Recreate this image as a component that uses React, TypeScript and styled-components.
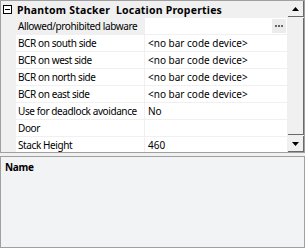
import styled, { createGlobalStyle } from 'styled-components';

const Global = createGlobalStyle`
  html, body { margin: 0; padding: 0; background: #f0f0f0; }
  body { font-family: "Noto Sans", "DejaVu Sans", sans-serif; font-size: 10px; color: #000; }
`;

const Frame = styled.div`
  width: 305px;
  height: 248px;
  display: flex;
  flex-direction: column;
  gap: 3px;
  background: #f0f0f0;
`;

const Grid = styled.div`
  height: 153px;
  box-sizing: border-box;
  border: 1px solid #a0a0a0;
  display: flex;
  background: #f0f0f0;
`;

const Rows = styled.div`
  flex: 1;
  overflow: hidden;
`;

const Header = styled.div`
  height: 17px;
  display: flex;
  align-items: center;
  gap: 5px;
  padding-left: 2px;
  font-weight: bold;
  font-size: 10.5px;
  letter-spacing: 0.2px;
`;

const Toggle = styled.span`
  width: 9px;
  height: 9px;
  box-sizing: border-box;
  border: 1px solid #000;
  position: relative;
  background: #fff;
  &::after {
    content: '';
    position: absolute;
    left: 1px;
    right: 1px;
    top: 3px;
    height: 1px;
    background: #000;
  }
`;

const Row = styled.div`
  height: 17px;
  display: grid;
  grid-template-columns: 15px 128px 1fr;
`;

const Cell = styled.div<{ $shaded?: boolean; $name?: boolean }>`
  display: flex;
  align-items: center;
  padding-left: ${({ $name }) => ($name ? '2px' : '3px')};
  white-space: nowrap;
  overflow: hidden;
  letter-spacing: ${({ $name }) => ($name ? '-0.4px' : '0')};
  background: ${({ $shaded }) => ($shaded ? '#f0f0f0' : '#fff')};
  border-bottom: 1px solid #f0f0f0;
  & + & { border-left: 1px solid #f0f0f0; }
`;

const Gutter = styled.div``;

const Ellipsis = styled.span`
  margin-left: auto;
  margin-right: 1px;
  width: 14px;
  height: 14px;
  background: #ececec;
  display: flex;
  align-items: center;
  justify-content: center;
  gap: 1px;
`;

const Dot = styled.i`
  width: 2px;
  height: 2px;
  background: #666;
`;

const Scroll = styled.div`
  width: 16px;
  display: flex;
  flex-direction: column;
  background: #f0f0f0;
  border-left: 1px solid #f0f0f0;
`;

const Arrow = styled.div`
  height: 16px;
  box-sizing: border-box;
  border-right: 1px solid #696969;
  border-bottom: 1px solid #696969;
  display: flex;
  align-items: center;
  justify-content: center;
  background: #f0f0f0;
`;

const Thumb = styled.div`
  flex: 1;
  margin: 1px 0;
  box-sizing: border-box;
  border-right: 1px solid #696969;
  border-bottom: 1px solid #696969;
  background: #f0f0f0;
`;

const Desc = styled.div`
  height: 92px;
  box-sizing: border-box;
  border: 1px solid #a0a0a0;
  background: #f2f3f5;
  padding: 3px 4px;
  font-weight: bold;
  letter-spacing: -0.3px;
`;

const rows: [string, string][] = [
  ['BCR on south side', '<no bar code device>'],
  ['BCR on west side', '<no bar code device>'],
  ['BCR on north side', '<no bar code device>'],
  ['BCR on east side', '<no bar code device>'],
  ['Use for deadlock avoidance', 'No'],
  ['Door', ''],
  ['Stack Height', '460'],
];

export default function App() {
  return (
    <Frame>
      <Global />
      <Grid>
        <Rows>
          <Header>
            <Toggle />
            Phantom Stacker&nbsp; Location Properties
          </Header>
          <Row>
            <Gutter />
            <Cell $shaded $name>Allowed/prohibited labware</Cell>
            <Cell>
              <Ellipsis>
                <Dot />
                <Dot />
                <Dot />
              </Ellipsis>
            </Cell>
          </Row>
          {rows.map(([name, value]) => (
            <Row key={name}>
              <Gutter />
              <Cell $name>{name}</Cell>
              <Cell>{value}</Cell>
            </Row>
          ))}
        </Rows>
        <Scroll>
          <Arrow>
            <svg width="7" height="4" viewBox="0 0 7 4"><path d="M3.5 0L7 4H0z" fill="#000" /></svg>
          </Arrow>
          <Thumb />
          <Arrow>
            <svg width="7" height="4" viewBox="0 0 7 4"><path d="M0 0H7L3.5 4z" fill="#000" /></svg>
          </Arrow>
        </Scroll>
      </Grid>
      <Desc>Name</Desc>
    </Frame>
  );
}
